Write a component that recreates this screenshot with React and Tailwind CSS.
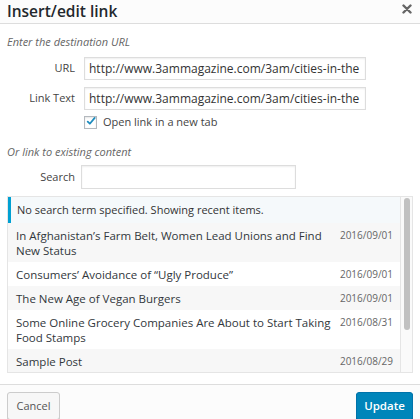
import React from "react";

const rows = [
  { title: "In Afghanistan\u2019s Farm Belt, Women Lead Unions and Find New Status", date: "2016/09/01", alt: true },
  { title: "Consumers\u2019 Avoidance of \u201cUgly Produce\u201d", date: "2016/09/01", alt: false },
  { title: "The New Age of Vegan Burgers", date: "2016/09/01", alt: true },
  { title: "Some Online Grocery Companies Are About to Start Taking Food Stamps", date: "2016/08/31", alt: false },
  { title: "Sample Post", date: "2016/08/29", alt: true },
];

export default function App() {
  return (
    <div
      className="w-[420px] h-[419px] overflow-hidden bg-white text-[#444] flex flex-col"
      style={{ fontFamily: '"Open Sans", "Noto Sans", sans-serif' }}
    >
      {/* Header */}
      <div className="h-[24px] shrink-0 border-b border-[#ddd] bg-[#fcfcfc] flex items-center justify-between pl-[7px] pr-[8px]">
        <h1 className="text-[15.5px] leading-[22px] font-semibold text-[#23282d] -mt-[2px]">Insert/edit link</h1>
        <svg width="10" height="10" viewBox="0 0 10 10" className="-mt-[5px]">
          <path d="M1.5 1.5 L8.5 8.5 M8.5 1.5 L1.5 8.5" stroke="#666" strokeWidth="2.4" strokeLinecap="round" />
        </svg>
      </div>

      {/* Body */}
      <div className="px-[7px] flex flex-col">
        <p className="mt-[10px] text-[11px] leading-[16px] italic text-[#666]">Enter the destination URL</p>

        <div className="mt-[7px] flex items-center">
          <label className="w-[68px] text-right text-[11px] text-[#444]">URL</label>
          <div className="ml-[9px] w-[282px] h-[23px] border border-[#ddd] shadow-[inset_0_1px_2px_rgba(0,0,0,0.07)] bg-white pl-[4px] flex items-center text-[12px] text-[#333] overflow-hidden whitespace-nowrap">
            http://www.3ammagazine.com/3am/cities-in-the
          </div>
        </div>

        <div className="mt-[7px] flex items-center">
          <label className="w-[68px] text-right text-[11px] text-[#444]">Link Text</label>
          <div className="ml-[9px] w-[282px] h-[23px] border border-[#ddd] shadow-[inset_0_1px_2px_rgba(0,0,0,0.07)] bg-white pl-[4px] flex items-center text-[12px] text-[#333] overflow-hidden whitespace-nowrap">
            http://www.3ammagazine.com/3am/cities-in-the
          </div>
        </div>

        <div className="mt-[4px] h-[16px] flex items-center pl-[77px]">
          <div className="w-[13px] h-[13px] border border-[#b4b9be] bg-white flex items-center justify-center shadow-[inset_0_1px_2px_rgba(0,0,0,0.1)]">
            <svg width="13" height="13" viewBox="0 0 13 13" className="-mt-[1px] ml-[1px]">
              <path d="M2.2 6.6 L5 9.4 L11.3 1.8" stroke="#1e8cbe" strokeWidth="2.3" fill="none" strokeLinecap="round" strokeLinejoin="round" />
            </svg>
          </div>
          <span className="ml-[6px] text-[11px] text-[#444]">Open link in a new tab</span>
        </div>

        <p className="mt-[14px] text-[11px] leading-[16px] italic text-[#666]">Or link to existing content</p>

        <div className="mt-[5px] flex items-center">
          <label className="w-[68px] text-right text-[11px] text-[#444]">Search</label>
          <div className="ml-[6px] w-[215px] h-[24px] border border-[#ddd] shadow-[inset_0_1px_2px_rgba(0,0,0,0.07)] bg-white" />
        </div>

        {/* Results */}
        <div className="mt-[7px] h-[177px] border border-[#e5e5e5] flex overflow-hidden bg-white">
          <div className="flex-1 flex flex-col min-w-0">
            <div className="h-[26px] shrink-0 border-l-[3px] border-[#00a0d2] bg-[#f5f9fb] pl-[6px] flex items-center text-[11px] text-[#333]">
              No search term specified. Showing recent items.
            </div>
            {rows.map((r, i) => (
              <div
                key={i}
                className={`shrink-0 flex items-start pt-[5px] pb-[4px] pl-[8px] pr-[7px] ${r.alt ? "bg-[#f7f7f7]" : "bg-white"}`}
              >
                <span className="flex-1 text-[11.5px] leading-[15px] text-[#32373c] pr-[2px]">{r.title}</span>
                <span className="shrink-0 text-[10px] leading-[15px] text-[#666]">{r.date}</span>
              </div>
            ))}
          </div>
          <div className="w-[12px] shrink-0 border-l border-[#e5e5e5] bg-[#fafafa] flex justify-center pt-[1px]">
            <div className="w-[6px] h-[132px] rounded-full bg-[#c1c1c1]" />
          </div>
        </div>
      </div>

      {/* Footer */}
      <div className="mt-[11px] flex-1 border-t border-[#ddd] bg-[#fcfcfc] px-[7px] pt-[7px] flex justify-between items-start">
        <button className="h-[28px] w-[53px] border border-[#ccc] rounded-[3px] bg-[#f7f7f7] text-[11px] text-[#555] shadow-[0_1px_0_#ccc]">
          Cancel
        </button>
        <button className="h-[28px] w-[57px] border border-[#0073aa] rounded-[3px] bg-[#0085ba] text-[11.5px] font-semibold text-white shadow-[0_1px_0_#006799]">
          Update
        </button>
      </div>
    </div>
  );
}
